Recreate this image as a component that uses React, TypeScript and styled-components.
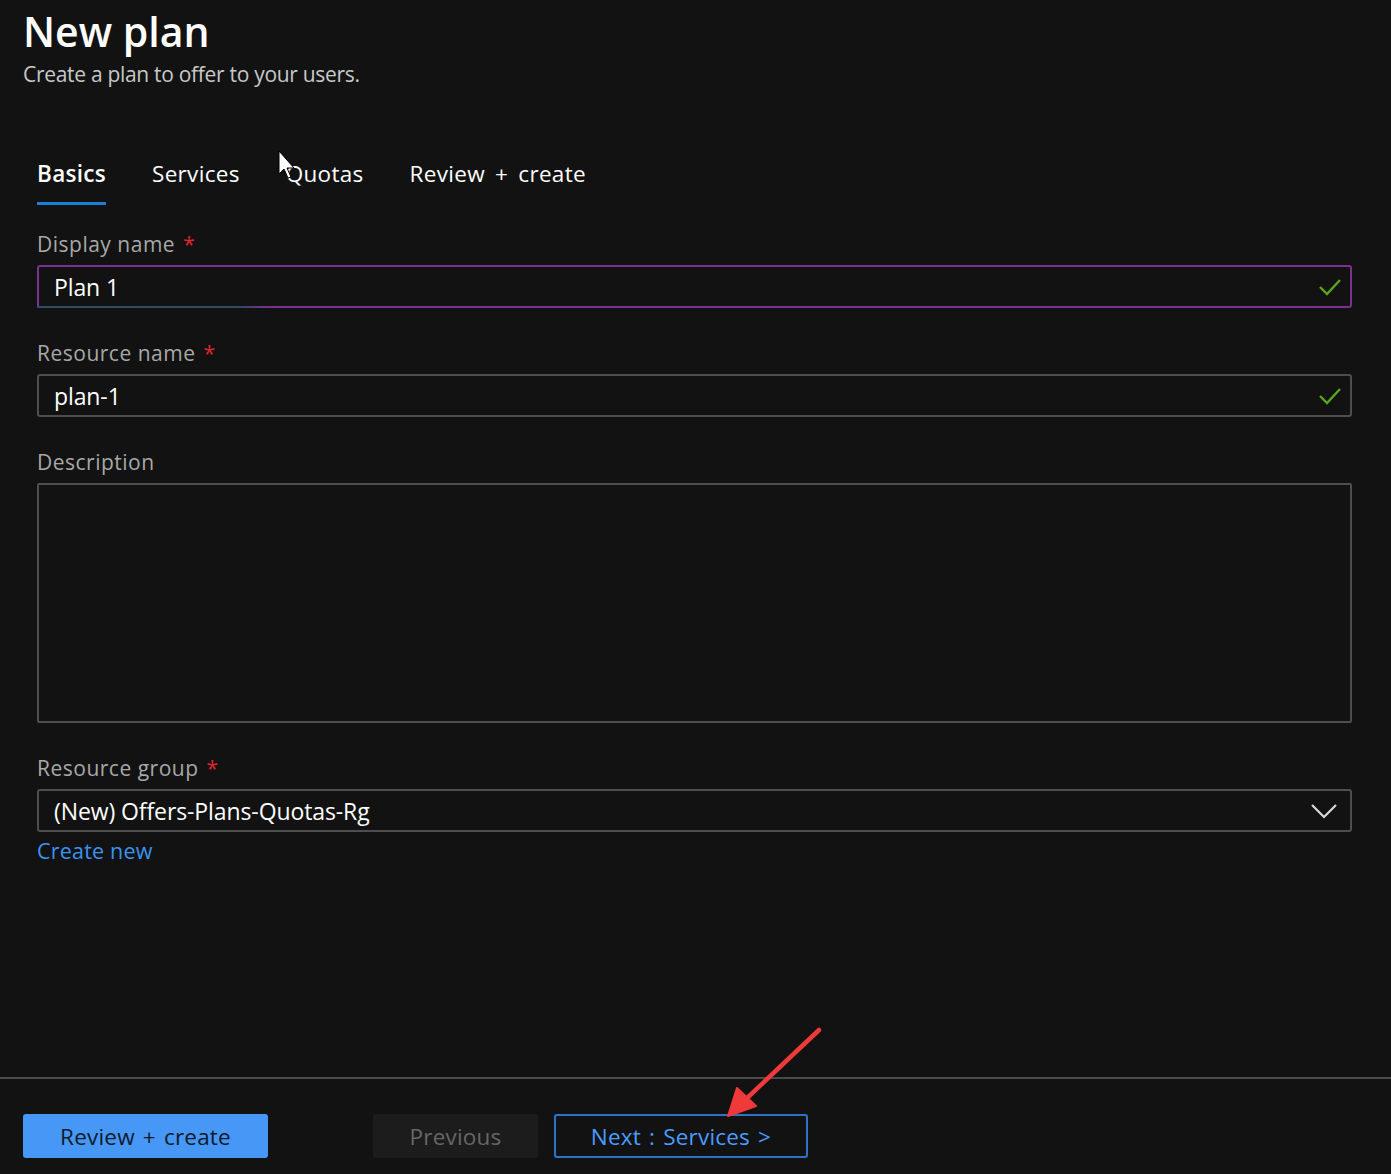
import React from "react";
import styled, { createGlobalStyle } from "styled-components";

const Global = createGlobalStyle`
  html, body { margin: 0; padding: 0; background: #121212; }
  body { font-family: "Open Sans", "Noto Sans", sans-serif; color: #fff; }
  * { box-sizing: border-box; }
`;

const Page = styled.div`
  position: relative;
  width: 1391px;
  height: 1174px;
  display: flex;
  flex-direction: column;
  background: #121212;
  overflow: hidden;
`;

const Main = styled.div`
  flex: 1;
  display: flex;
  flex-direction: column;
`;

const Header = styled.header`
  padding: 5px 0 0 23px;
`;

const Title = styled.h1`
  margin: 0;
  font-size: 41px;
  line-height: 52px;
  font-weight: 600;
  color: #ffffff;
`;

const Subtitle = styled.p`
  margin: 3px 0 0;
  font-size: 21px;
  line-height: 28px;
  color: #c8c8c8;
  letter-spacing: -0.3px;
`;

const Tabs = styled.nav`
  display: flex;
  gap: 46px;
  margin: 70px 0 0 37px;
`;

const Tab = styled.div<{ $active?: boolean }>`
  position: relative;
  font-size: 22.5px;
  line-height: 32px;
  padding-bottom: 15px;
  color: #ffffff;
  font-weight: ${(p) => (p.$active ? 600 : 400)};
  letter-spacing: 0.3px;
  word-spacing: 4px;
  &::after {
    content: "";
    display: ${(p) => (p.$active ? "block" : "none")};
    position: absolute;
    left: 0;
    right: 0;
    bottom: 0;
    height: 3px;
    background: #1a7fd6;
  }
`;

const Form = styled.div`
  display: flex;
  flex-direction: column;
  padding: 24px 39px 0 37px;
`;

const Field = styled.div<{ $gap?: number }>`
  display: flex;
  flex-direction: column;
  margin-bottom: ${(p) => p.$gap ?? 30}px;
`;

const Label = styled.label`
  font-size: 21px;
  line-height: 30px;
  color: #a8a8a8;
  margin-bottom: 6px;
  letter-spacing: 0.5px;
`;

const Req = styled.span`
  color: #e0242e;
  margin-left: 8px;
`;

const InputBox = styled.div<{ $focus?: boolean }>`
  position: relative;
  display: flex;
  align-items: center;
  justify-content: space-between;
  height: 43px;
  padding: 0 8px 0 15px;
  border: 2px solid ${(p) => (p.$focus ? "#7d2f92" : "#4e4e4e")};
  border-radius: 3px;
  background: #121212;
  font-size: 23px;
  color: #ffffff;
  letter-spacing: -0.1px;
`;

const FocusTrace = styled.span`
  position: absolute;
  left: -2px;
  bottom: -2px;
  width: 236px;
  height: 2px;
  background: linear-gradient(90deg, #2c4f6a, #2e4a66 85%, rgba(46, 74, 102, 0));
`;

const TextArea = styled.div`
  height: 240px;
  border: 2px solid #4e4e4e;
  border-radius: 2px;
`;

const Link = styled.a`
  margin-top: 5px;
  font-size: 21.5px;
  line-height: 28px;
  color: #3b92f0;
  text-decoration: none;
  letter-spacing: 0.2px;
`;

const Footer = styled.footer`
  height: 97px;
  border-top: 2px solid #4a4a4a;
  display: flex;
  align-items: flex-start;
  padding: 35px 0 0 23px;
`;

const Button = styled.button<{ $variant: "primary" | "disabled" | "outline"; $w: number }>`
  height: 44px;
  width: ${(p) => p.$w}px;
  font-family: inherit;
  font-size: 22.5px;
  letter-spacing: 0.2px;
  word-spacing: 2px;
  border-radius: 3px;
  cursor: pointer;
  background: ${(p) =>
    p.$variant === "primary" ? "#4797f7" : p.$variant === "disabled" ? "#1c1c1c" : "#121212"};
  color: ${(p) =>
    p.$variant === "primary" ? "#0f1a2a" : p.$variant === "disabled" ? "#666666" : "#4a9cff"};
  border: ${(p) => (p.$variant === "outline" ? "2px solid #2d74c8" : "none")};
  margin-left: ${(p) => (p.$variant === "disabled" ? 105 : p.$variant === "outline" ? 16 : 0)}px;
`;

const Overlay = styled.svg`
  position: absolute;
  left: 0;
  top: 0;
  pointer-events: none;
`;

const Check = () => (
  <svg width="24" height="20" viewBox="0 0 24 20">
    <path d="M2 10 L9 17 L22 3" fill="none" stroke="#5aa51d" strokeWidth="2.4" />
  </svg>
);

const Chevron = () => (
  <svg width="28" height="18" viewBox="0 0 28 18" style={{ marginRight: 4 }}>
    <path d="M2 3 L14 15 L26 3" fill="none" stroke="#d8d8d8" strokeWidth="2.2" />
  </svg>
);

export default function App() {
  return (
    <Page>
      <Global />
      <Main>
        <Header>
          <Title>New plan</Title>
          <Subtitle>Create a plan to offer to your users.</Subtitle>
        </Header>
        <Tabs>
          <Tab $active>Basics</Tab>
          <Tab>Services</Tab>
          <Tab>Quotas</Tab>
          <Tab>Review + create</Tab>
        </Tabs>
        <Form>
          <Field>
            <Label>
              Display name<Req>*</Req>
            </Label>
            <InputBox $focus>
              Plan 1
              <Check />
              <FocusTrace />
            </InputBox>
          </Field>
          <Field>
            <Label>
              Resource name<Req>*</Req>
            </Label>
            <InputBox>
              plan-1
              <Check />
            </InputBox>
          </Field>
          <Field>
            <Label>Description</Label>
            <TextArea />
          </Field>
          <Field $gap={0}>
            <Label>
              Resource group<Req>*</Req>
            </Label>
            <InputBox>
              (New) Offers-Plans-Quotas-Rg
              <Chevron />
            </InputBox>
            <Link href="#">Create new</Link>
          </Field>
        </Form>
      </Main>
      <Footer>
        <Button $variant="primary" $w={245}>Review + create</Button>
        <Button $variant="disabled" $w={165}>Previous</Button>
        <Button $variant="outline" $w={254}>Next : Services &gt;</Button>
      </Footer>
      <Overlay width="1391" height="1174" viewBox="0 0 1391 1174">
        <line x1="819" y1="1030" x2="745" y2="1100" stroke="#f03a3a" strokeWidth="4.5" strokeLinecap="round" />
        <path d="M728 1116 L737 1088 L756 1106 Z" fill="#f03a3a" stroke="#f03a3a" strokeWidth="2" strokeLinejoin="round" />
        <path
          d="M279 151 L279 174 L284 169 L288 178 L291 177 L287 168 L294 168 Z"
          fill="#ffffff"
          stroke="#000000"
          strokeWidth="1"
        />
      </Overlay>
    </Page>
  );
}
